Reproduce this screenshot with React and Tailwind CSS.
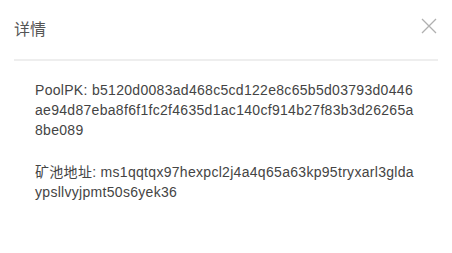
export default function App() {
  return (
    <div className="w-[452px] h-[253px] bg-white" style={{ fontFamily: '"Liberation Sans", Arial, "Noto Sans CJK SC", sans-serif' }}>
      <div className="mx-[14px] flex items-start justify-between h-[61px] pt-[18px] border-b-2 border-[#eeeeee]">
        <h2 className="text-[16px] leading-[23px] text-[#555555] font-normal">详情</h2>
        <button className="w-[16px] h-[16px] mr-[1px] text-[#b0b0b0]">
          <svg viewBox="0 0 16 16" width="16" height="16" stroke="currentColor" strokeWidth="1.3" fill="none">
            <path d="M1 1 L15 15 M15 1 L1 15" />
          </svg>
        </button>
      </div>
      <div className="pl-[35px] pr-[37px] pt-[19px] text-[14px] leading-[20px] tracking-[0.3px] text-[#444444] break-all">
        <p>PoolPK: b5120d0083ad468c5cd122e8c65b5d03793d0446ae94d87eba8f6f1fc2f4635d1ac140cf914b27f83b3d26265a8be089</p>
        <p className="mt-[22px]">矿池地址: ms1qqtqx97hexpcl2j4a4q65a63kp95tryxarl3gldaypsllvyjpmt50s6yek36</p>
      </div>
    </div>
  );
}
